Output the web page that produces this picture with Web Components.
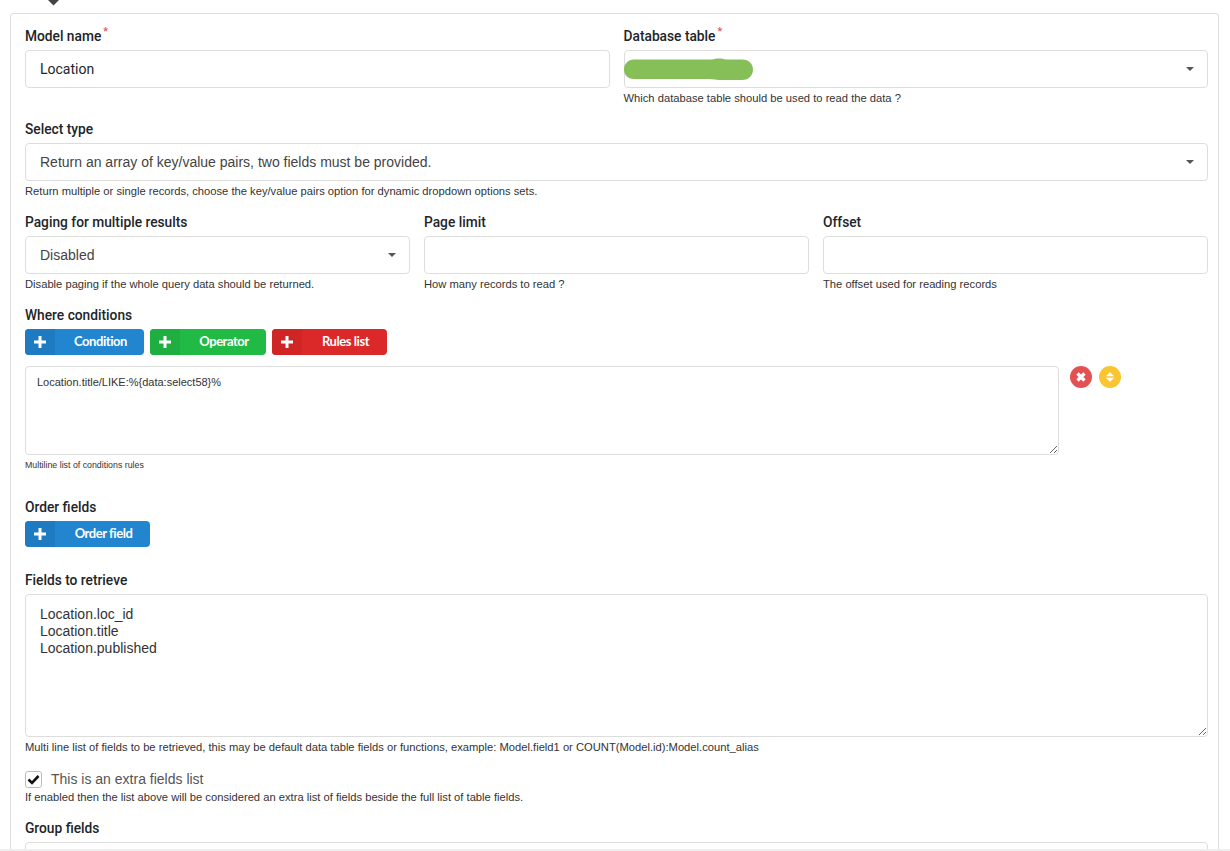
<!DOCTYPE html>
<html>
<head>
<meta charset="utf-8">
<title>Model</title>
<style>
html, body { margin: 0; padding: 0; height: 851px; overflow: hidden; background: #fff; }
body { font-family: "Liberation Sans", Arial, sans-serif; color: #212529; }
</style>
</head>
<body>
<tab-caret></tab-caret>
<form-card>
  <form-row cols="2">
    <form-field label="Model name" required>
      <text-box value="Location"></text-box>
    </form-field>
    <form-field label="Database table" required help="Which database table should be used to read the data ?">
      <select-box><redact-blob></redact-blob></select-box>
    </form-field>
  </form-row>
  <form-field label="Select type" help="Return multiple or single records, choose the key/value pairs option for dynamic dropdown options sets.">
    <select-box>Return an array of key/value pairs, two fields must be provided.</select-box>
  </form-field>
  <form-row cols="3">
    <form-field label="Paging for multiple results" help="Disable paging if the whole query data should be returned.">
      <select-box>Disabled</select-box>
    </form-field>
    <form-field label="Page limit" help="How many records to read ?">
      <text-box></text-box>
    </form-field>
    <form-field label="Offset" help="The offset used for reading records">
      <text-box></text-box>
    </form-field>
  </form-row>
  <form-field label="Where conditions" box-height="59">
    <button-row>
      <add-button color="blue" box-width="119">Condition</add-button>
      <add-button color="green" box-width="116">Operator</add-button>
      <add-button color="red" box-width="115">Rules list</add-button>
    </button-row>
  </form-field>
  <rules-item value="Location.title/LIKE:%{data:select58}%" help="Multiline list of conditions rules"></rules-item>
  <form-field label="Order fields" box-height="73">
    <add-button color="blue" box-width="125">Order field</add-button>
  </form-field>
  <form-field label="Fields to retrieve" box-height="198" help="Multi line list of fields to be retrieved, this may be default data table fields or functions, example: Model.field1 or COUNT(Model.id):Model.count_alias">
    <text-area box-height="143">Location.loc_id
Location.title
Location.published</text-area>
  </form-field>
  <check-row help="If enabled then the list above will be considered an extra list of fields beside the full list of table fields.">This is an extra fields list</check-row>
  <form-field label="Group fields" box-height="60">
    <text-box></text-box>
  </form-field>
</form-card>
<bottom-edge></bottom-edge>

<script>
class TabCaret extends HTMLElement {
    connectedCallback() {
        this.attachShadow({ mode: 'open' });
        this.shadowRoot.innerHTML = `
            <style>
                :host { display: block; height: 13px; padding-left: 47px; }
                svg { display: block; }
            </style>
            <svg width="13" height="6" viewBox="0 0 13 6"><path d="M1 0H12L6.5 5.5Z" fill="#444"/></svg>
        `;
    }
}
customElements.define('tab-caret', TabCaret);

class FormCard extends HTMLElement {
    connectedCallback() {
        this.attachShadow({ mode: 'open' });
        this.shadowRoot.innerHTML = `
            <style>
                :host {
                    display: block;
                    box-sizing: border-box;
                    width: 1209px;
                    height: 838px;
                    margin-left: 10px;
                    padding: 14px 10px 0 14px;
                    border: 1px solid #ddd;
                    border-bottom: 0;
                    border-radius: 4px 4px 0 0;
                    overflow: hidden;
                }
            </style>
            <slot></slot>
        `;
    }
}
customElements.define('form-card', FormCard);

class FormRow extends HTMLElement {
    connectedCallback() {
        this.attachShadow({ mode: 'open' });
        const cols = this.getAttribute('cols') || 2;
        this.shadowRoot.innerHTML = `
            <style>
                :host {
                    display: grid;
                    grid-template-columns: repeat(${cols}, 1fr);
                    column-gap: 14px;
                }
            </style>
            <slot></slot>
        `;
    }
}
customElements.define('form-row', FormRow);

class FormField extends HTMLElement {
    connectedCallback() {
        this.attachShadow({ mode: 'open' });
        const help = this.getAttribute('help');
        const star = this.hasAttribute('required') ? '<sup>*</sup>' : '';
        this.shadowRoot.innerHTML = `
            <style>
                :host { display: block; height: ${this.getAttribute('box-height') || 93}px; }
                .label {
                    height: 22px;
                    font: 500 13.75px/16px Roboto, "Liberation Sans", sans-serif;
                    color: #212529;
                }
                sup {
                    color: #e0483f;
                    font-size: 11px;
                    line-height: 0;
                    margin-left: 2px;
                    vertical-align: 6px;
                    font-weight: 400;
                }
                .help {
                    margin-top: 3px;
                    font: 11.2px/14px "Liberation Sans", sans-serif;
                    color: #333;
                }
            </style>
            <div class="label">${this.getAttribute('label')}${star}</div>
            <slot></slot>
            ${help ? `<div class="help">${help}</div>` : ''}
        `;
    }
}
customElements.define('form-field', FormField);

class TextBox extends HTMLElement {
    connectedCallback() {
        this.attachShadow({ mode: 'open' });
        this.shadowRoot.innerHTML = `
            <style>
                :host {
                    display: block;
                    box-sizing: border-box;
                    height: 38px;
                    padding: 0 14px;
                    border: 1px solid #ddd;
                    border-radius: 4px;
                    font: 14px/36px Roboto, "Liberation Sans", sans-serif;
                    color: #212529;
                }
            </style>
            ${this.getAttribute('value') || ''}
        `;
    }
}
customElements.define('text-box', TextBox);

class SelectBox extends HTMLElement {
    connectedCallback() {
        this.attachShadow({ mode: 'open' });
        this.shadowRoot.innerHTML = `
            <style>
                :host {
                    display: flex;
                    align-items: center;
                    justify-content: space-between;
                    box-sizing: border-box;
                    height: 38px;
                    padding: 0 13px 0 14px;
                    border: 1px solid #ddd;
                    border-radius: 4px;
                    font: 14px/36px "Liberation Sans", sans-serif;
                    color: #444;
                }
                svg { flex: none; }
            </style>
            <span><slot></slot></span>
            <svg width="8" height="4" viewBox="0 0 8 4"><path d="M0 0H8L4 4Z" fill="#555"/></svg>
        `;
    }
}
customElements.define('select-box', SelectBox);

class RedactBlob extends HTMLElement {
    connectedCallback() {
        this.attachShadow({ mode: 'open' });
        this.shadowRoot.innerHTML = `
            <style>
                :host { display: block; margin-left: -15px; }
                svg { display: block; }
            </style>
            <svg width="130" height="23" viewBox="0 0 130 23">
                <path d="M10 1.5H88C92 0 98 0 102 1.5H118C125 1.5 129 6 129 11.5S125 22 118 22H104C98 22 92 22 86 21H10C4 21 0 17 0 11.5S4 1.5 10 1.5Z" fill="#86bf57"/>
            </svg>
        `;
    }
}
customElements.define('redact-blob', RedactBlob);

class ButtonRow extends HTMLElement {
    connectedCallback() {
        this.attachShadow({ mode: 'open' });
        this.shadowRoot.innerHTML = `
            <style>
                :host { display: flex; gap: 6px; }
            </style>
            <slot></slot>
        `;
    }
}
customElements.define('button-row', ButtonRow);

const BUTTON_COLORS = {
    blue: ['#2185d0', '#1e7bc2'],
    green: ['#21ba45', '#1faf41'],
    red: ['#db2828', '#cf2525']
};

class AddButton extends HTMLElement {
    connectedCallback() {
        this.attachShadow({ mode: 'open' });
        const colors = BUTTON_COLORS[this.getAttribute('color')];
        this.shadowRoot.innerHTML = `
            <style>
                :host {
                    display: inline-flex;
                    width: ${this.getAttribute('box-width')}px;
                    height: 26px;
                    border-radius: 4px;
                    overflow: hidden;
                    background: ${colors[0]};
                    color: #fff;
                    font: 700 13px/25px Lato, "Liberation Sans", sans-serif;
                    letter-spacing: -0.45px;
                    vertical-align: top;
                }
                .icon {
                    flex: none;
                    display: flex;
                    align-items: center;
                    justify-content: center;
                    width: 30px;
                    background: ${colors[1]};
                }
                .text { flex: 1; text-align: center; padding-left: 2px; }
            </style>
            <span class="icon">
                <svg width="12" height="12" viewBox="0 0 12 12"><path d="M4.5 0h3v4.5H12v3H7.5V12h-3V7.5H0v-3h4.5Z" fill="#fff"/></svg>
            </span>
            <span class="text"><slot></slot></span>
        `;
    }
}
customElements.define('add-button', AddButton);

class TextArea extends HTMLElement {
    connectedCallback() {
        this.attachShadow({ mode: 'open' });
        const value = this.getAttribute('value') || this.textContent;
        this.shadowRoot.innerHTML = `
            <style>
                :host { display: block; }
                textarea {
                    display: block;
                    box-sizing: border-box;
                    width: 100%;
                    height: ${this.getAttribute('box-height') || 89}px;
                    margin: 0;
                    padding: ${this.getAttribute('pad') || '11px 14px'};
                    border: 1px solid #ddd;
                    border-radius: 4px;
                    outline: none;
                    resize: vertical;
                    font: ${this.getAttribute('font') || '14px/17px "Liberation Sans", sans-serif'};
                    color: #333;
                    background: #fff;
                }
            </style>
            <textarea></textarea>
        `;
        this.shadowRoot.querySelector('textarea').textContent = value;
    }
}
customElements.define('text-area', TextArea);

class RulesItem extends HTMLElement {
    connectedCallback() {
        this.attachShadow({ mode: 'open' });
        this.shadowRoot.innerHTML = `
            <style>
                :host {
                    display: grid;
                    grid-template-columns: 1034px auto;
                    column-gap: 11px;
                    height: 133px;
                    align-content: start;
                }
                .actions { display: flex; gap: 7px; align-items: flex-start; }
                .help {
                    margin-top: 3px;
                    font: 8.8px/14px "Liberation Sans", sans-serif;
                    color: #333;
                }
                svg { display: block; }
            </style>
            <div>
                <text-area box-height="89" pad="8px 11px" font='11px/14px "Liberation Sans", sans-serif' value="${this.getAttribute('value')}"></text-area>
                <div class="help">${this.getAttribute('help')}</div>
            </div>
            <div class="actions">
                <svg width="22" height="22" viewBox="0 0 22 22">
                    <circle cx="11" cy="11" r="11" fill="#e25252"/>
                    <path d="M7.5 7.5L14.5 14.5M14.5 7.5L7.5 14.5" stroke="#fff" stroke-width="3.2"/>
                </svg>
                <svg width="22" height="22" viewBox="0 0 22 22">
                    <circle cx="11" cy="11" r="11" fill="#fbc531"/>
                    <path d="M11 6L15 10.3H7ZM11 16L15 11.7H7Z" fill="#fff"/>
                </svg>
            </div>
        `;
    }
}
customElements.define('rules-item', RulesItem);

class CheckRow extends HTMLElement {
    connectedCallback() {
        this.attachShadow({ mode: 'open' });
        this.shadowRoot.innerHTML = `
            <style>
                :host { display: block; height: 50px; }
                .line { display: flex; align-items: center; gap: 9px; height: 18px; }
                .box {
                    box-sizing: border-box;
                    width: 17px;
                    height: 17px;
                    border: 1px solid #bbb;
                    border-radius: 3px;
                    display: flex;
                    align-items: center;
                    justify-content: center;
                }
                .text { font: 14px/18px "Liberation Sans", sans-serif; color: #555; }
                .help { margin-top: 2px; font: 11.2px/14px "Liberation Sans", sans-serif; color: #333; }
            </style>
            <div class="line">
                <span class="box">
                    <svg width="13" height="11" viewBox="0 0 13 11"><path d="M1.5 5.5L5 9L11.5 2" fill="none" stroke="#111" stroke-width="2.6"/></svg>
                </span>
                <span class="text"><slot></slot></span>
            </div>
            <div class="help">${this.getAttribute('help')}</div>
        `;
    }
}
customElements.define('check-row', CheckRow);

class BottomEdge extends HTMLElement {
    connectedCallback() {
        this.attachShadow({ mode: 'open' });
        this.shadowRoot.innerHTML = `
            <style>
                :host {
                    position: fixed;
                    left: 0;
                    right: 0;
                    bottom: 0;
                    height: 2px;
                    background: #eee;
                }
            </style>
        `;
    }
}
customElements.define('bottom-edge', BottomEdge);
</script>
</body>
</html>
